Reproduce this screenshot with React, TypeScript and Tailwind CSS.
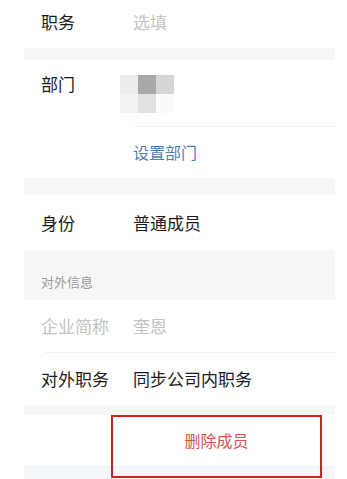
const font = { fontFamily: '"Noto Sans CJK SC", "Noto Sans", sans-serif' };

const Mosaic = () => (
  <svg width="54" height="38" viewBox="0 0 54 38" className="blur-[0.5px]">
    <rect x="0" y="0" width="18" height="19" fill="#ececec" />
    <rect x="18" y="0" width="18" height="19" fill="#a8a8a8" />
    <rect x="36" y="0" width="18" height="19" fill="#d6d6d6" />
    <rect x="0" y="19" width="18" height="19" fill="#f3f3f3" />
    <rect x="18" y="19" width="18" height="19" fill="#e1e1e1" />
    <rect x="36" y="19" width="18" height="19" fill="#fafafa" />
  </svg>
);

export default function App() {
  return (
    <div className="min-h-[479px] w-[347px] bg-white" style={font}>
      <div className="ml-[24px] w-[311px] text-[17px] text-[#1b1b1b]">
        <div className="flex h-[48px] items-center pb-[4px]">
          <span className="w-[109px] pl-[17px]">职务</span>
          <span className="text-[#c4c4c4]">选填</span>
        </div>
        <div className="h-[12px] bg-[#f6f6f6]" />

        <div className="h-[118px]">
          <div className="flex h-[66px] items-start">
            <span className="mt-[11px] w-[96px] pl-[17px]">部门</span>
            <div className="mt-[15px]">
              <Mosaic />
            </div>
          </div>
          <div className="ml-[109px] h-px bg-[#f2f2f2]" />
          <div className="flex h-[51px] items-center pb-[2px] pl-[109px] text-[16px] text-[#4f7cb3]">
            设置部门
          </div>
        </div>
        <div className="h-[17px] bg-[#f6f6f6]" />

        <div className="flex h-[55px] items-center">
          <span className="w-[109px] pl-[17px]">身份</span>
          <span>普通成员</span>
        </div>

        <div className="flex h-[50px] items-end bg-[#f7f7f8] pb-[9px] pl-[17px] text-[13px] text-[#999]">
          对外信息
        </div>

        <div className="flex h-[52px] items-center">
          <span className="w-[109px] pl-[17px] text-[#c2c2c2]">企业简称</span>
          <span className="text-[#c2c2c2]">奎恩</span>
        </div>
        <div className="ml-[21px] h-px bg-[#f2f2f2]" />
        <div className="flex h-[52px] items-center">
          <span className="w-[109px] pl-[17px]">对外职务</span>
          <span>同步公司内职务</span>
        </div>
        <div className="h-[10px] bg-[#f6f6f6]" />

        <div className="relative flex h-[50px] items-center justify-center pl-[74px] text-[16px] text-[#d9534f]">
          删除成员
          <div className="absolute left-[87px] top-0 h-[63px] w-[211px] border-2 border-[#d3201f]" />
        </div>
        <div className="h-[14px] bg-[#f4f8fa]" />
      </div>
    </div>
  );
}
